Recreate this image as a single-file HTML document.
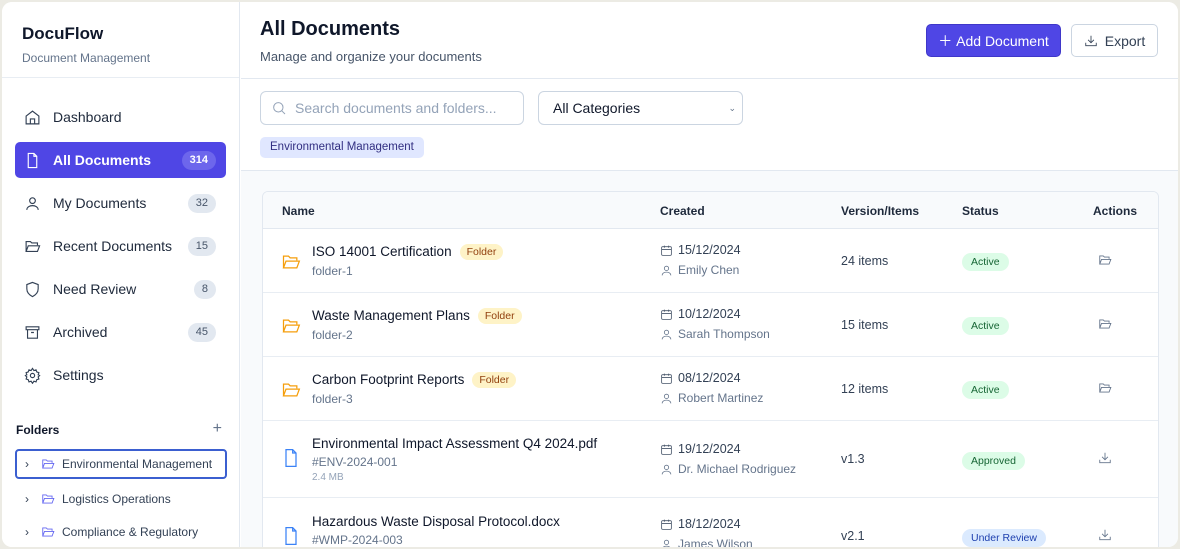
<!DOCTYPE html>
<html><head><style>
*{box-sizing:border-box;margin:0;padding:0}
body{width:1180px;height:549px;overflow:hidden;background:#ecebe4;font-family:"Liberation Sans",sans-serif;color:#0f172a}
.frame{position:absolute;left:2px;top:2px;width:1176px;height:545px;background:#fff;border-radius:10px;overflow:hidden}
.side{position:absolute;left:0;top:0;width:238px;height:545px;border-right:1px solid #e2e8f0;background:#fff}
.brand{height:76px;border-bottom:1px solid #e8edf3;padding:22px 0 0 20px}
.brand b{font-size:17px;display:block}
.brand span{font-size:12px;color:#64748b;display:block;margin-top:7px}
.nav{position:absolute;left:13px;width:211px;height:36px;border-radius:5px;display:flex;align-items:center;padding-left:9px;font-size:14px;color:#1e293b}
.nav svg{width:17px;height:17px;margin-right:12px;stroke:#334155;fill:none;stroke-width:1.6}
.nav .c{position:absolute;right:10px;background:#e2e8f0;color:#475569;font-size:11px;border-radius:10px;height:19px;line-height:19px;padding:0 8px}
.nav.act{background:#4f46e5;color:#fff;font-weight:bold}
.nav.act svg{stroke:#fff}
.nav.act .c{background:#6d66ec;color:#fff;font-weight:bold}
.fh{position:absolute;left:14px;top:421px;font-size:12px;font-weight:bold;width:206px}
.fh i{position:absolute;right:0;top:-3px;font-style:normal;color:#64748b;font-size:16px;font-weight:normal}
.fold{position:absolute;left:13px;width:212px;height:30px;font-size:12px;color:#334155;display:flex;align-items:center;padding-left:10px}
.fold.sel{border:2px solid #3b5fd0;border-radius:4px;padding-left:8px}
.fold svg{width:14px;height:14px;fill:none;stroke-width:1.5}
.main{position:absolute;left:239px;top:0;right:0;bottom:0;background:#f8fafc}
.hdr{height:77px;background:#fff;border-bottom:1px solid #e2e8f0;padding:16px 0 0 19px}
.hdr h1{font-size:20px;font-weight:bold}
.hdr p{font-size:13px;color:#475569;margin-top:8px}
.btn{position:absolute;top:22px;height:33px;border-radius:5px;font-size:14px;display:flex;align-items:center;justify-content:center}
.filt{height:92px;background:#fff;border-bottom:1px solid #e2e8f0;position:relative}
.inp{position:absolute;top:12px;height:34px;border:1px solid #cbd5e1;border-radius:6px;font-size:14px;display:flex;align-items:center}
.tag{position:absolute;left:19px;top:58px;height:21px;background:#e0e7ff;color:#312e81;font-size:11.5px;border-radius:5px;padding:0 10px;line-height:21px}
.card{position:absolute;left:21px;top:189px;width:897px;height:370px;background:#fff;border:1px solid #e2e8f0;border-radius:6px;overflow:hidden}
.th{height:37px;background:#f8fafc;border-bottom:1px solid #e2e8f0;font-size:12px;font-weight:bold;position:relative;color:#1e293b}
.th span,.r span{position:absolute}
.r{position:relative;border-bottom:1px solid #e8edf3;font-size:13px}
.nm{left:49px;top:15px;font-size:13.5px;color:#0f172a}
.sub{left:49px;font-size:12px;color:#64748b}
.badge{display:inline-block;background:#fef3c7;color:#92400e;font-size:10.5px;border-radius:9px;padding:2px 7px;margin-left:8px;vertical-align:1px}
.st{font-size:10.5px;border-radius:9px;padding:3px 9px;background:#dcfce7;color:#166534}
.dt{left:397px;font-size:12.5px;color:#334155;display:flex;align-items:center}
.au{left:397px;font-size:12px;color:#64748b;display:flex;align-items:center}
.dt svg,.au svg{margin-right:5px}
svg.s{stroke-width:1.5;fill:none}
</style></head><body><div class="frame">
<div class="side">
<div class="brand"><b>DocuFlow</b><span>Document Management</span></div>
<div class="nav" style="top:97px"><svg viewBox="0 0 24 24"><path d="M3 10l9-7 9 7v11H3z M9 21v-7h6v7"/></svg>Dashboard</div>
<div class="nav act" style="top:140px"><svg viewBox="0 0 24 24"><path d="M14 2H6v20h12V6z M14 2v4h4"/></svg>All Documents<span class="c">314</span></div>
<div class="nav" style="top:183px"><svg viewBox="0 0 24 24"><circle cx="12" cy="8" r="4"/><path d="M4 21c0-4 4-6 8-6s8 2 8 6"/></svg>My Documents<span class="c">32</span></div>
<div class="nav" style="top:226px"><svg viewBox="0 0 24 24"><path d="M3 19V5h6l2 2h8v3 M3 19l3-8h16l-3 8z"/></svg>Recent Documents<span class="c">15</span></div>
<div class="nav" style="top:269px"><svg viewBox="0 0 24 24"><path d="M12 2l8 3v6c0 6-4 9-8 11-4-2-8-5-8-11V5z"/></svg>Need Review<span class="c">8</span></div>
<div class="nav" style="top:312px"><svg viewBox="0 0 24 24"><path d="M3 4h18v4H3z M5 8v12h14V8 M10 12h4"/></svg>Archived<span class="c">45</span></div>
<div class="nav" style="top:355px"><svg viewBox="0 0 24 24"><circle cx="12" cy="12" r="3"/><path d="M12 2l2 3 3-1 1 3 3 1-1 3 2 1-2 2 1 3-3 1-1 3-3-1-2 3-2-3-3 1-1-3-3-1 1-3-2-2 2-1-1-3 3-1 1-3 3 1z"/></svg>Settings</div>
<div class="fh">Folders<i>+</i></div>
<div class="fold sel" style="top:447px"><span style="color:#334155;margin-right:12px">›</span><svg viewBox="0 0 24 24" stroke="#6366f1"><path d="M3 19V5h6l2 2h8v3 M3 19l3-8h16l-3 8z"/></svg><span style="margin-left:7px">Environmental Management</span></div>
<div class="fold" style="top:482px"><span style="margin-right:12px">›</span><svg viewBox="0 0 24 24" stroke="#6366f1"><path d="M3 19V5h6l2 2h8v3 M3 19l3-8h16l-3 8z"/></svg><span style="margin-left:7px">Logistics Operations</span></div>
<div class="fold" style="top:515px"><span style="margin-right:12px">›</span><svg viewBox="0 0 24 24" stroke="#6366f1"><path d="M3 19V5h6l2 2h8v3 M3 19l3-8h16l-3 8z"/></svg><span style="margin-left:7px">Compliance &amp; Regulatory</span></div>
</div>
<div class="main">
<div class="hdr"><h1>All Documents</h1><p>Manage and organize your documents</p>
<div class="btn" style="left:685px;width:135px;background:#4f46e5;color:#fff;border:1px solid #3f37c9">＋&nbsp;Add Document</div>
<div class="btn" style="left:830px;width:87px;border:1px solid #cbd5e1;color:#334155;background:#fff"><svg class="s" width="14" height="14" viewBox="0 0 24 24" stroke="#334155" style="margin-right:7px"><path d="M12 3v12 M7 10l5 5 5-5 M3 15v5h18v-5"/></svg>Export</div>
</div>
<div class="filt">
<div class="inp" style="left:19px;width:264px;color:#94a3b8"><svg class="s" width="16" height="16" viewBox="0 0 24 24" stroke="#94a3b8" style="margin:0 8px 0 10px"><circle cx="11" cy="11" r="7"/><path d="M16 16l5 5"/></svg>Search documents and folders...</div>
<div class="inp" style="left:297px;width:205px;padding-left:14px;color:#0f172a">All Categories<span style="position:absolute;right:6px;font-size:9px;color:#64748b">⌄</span></div>
<div class="tag">Environmental Management</div>
</div>
<div class="card">
<div class="th"><span style="left:19px;top:12px">Name</span><span style="left:397px;top:12px">Created</span><span style="left:578px;top:12px">Version/Items</span><span style="left:699px;top:12px">Status</span><span style="left:830px;top:12px">Actions</span></div>
<div class="r" style="height:64px"><svg class="s" style="position:absolute;top:23px;left:18px" width="20" height="20" viewBox="0 0 24 24" stroke="#f59e0b" stroke-width="1.8"><path d="M3 19V5h6l2 2h8v3 M3 19l3-8h16l-3 8z"/></svg>
<span class="nm">ISO 14001 Certification<span class="badge">Folder</span></span><span class="sub" style="top:35px">folder-1</span>
<span class="dt" style="top:14px"><svg class="s" width="13" height="13" viewBox="0 0 24 24" stroke="#475569" stroke-width="2"><rect x="3" y="5" width="18" height="16" rx="2"/><path d="M3 10h18 M8 3v4 M16 3v4"/></svg>15/12/2024</span><span class="au" style="top:34px"><svg class="s" width="13" height="13" viewBox="0 0 24 24" stroke="#64748b" stroke-width="2"><circle cx="12" cy="8" r="4"/><path d="M4 21c0-4 4-6 8-6s8 2 8 6"/></svg>Emily Chen</span>
<span style="left:578px;top:25px;font-size:12.5px;color:#334155">24 items</span><span class="st" style="left:699px;top:24px">Active</span><span style="left:835px;top:24px"><svg class="s" width="14" height="14" viewBox="0 0 24 24" stroke="#64748b"><path d="M3 19V5h6l2 2h8v3 M3 19l3-8h16l-3 8z"/></svg></span></div>
<div class="r" style="height:64px"><svg class="s" style="position:absolute;top:23px;left:18px" width="20" height="20" viewBox="0 0 24 24" stroke="#f59e0b" stroke-width="1.8"><path d="M3 19V5h6l2 2h8v3 M3 19l3-8h16l-3 8z"/></svg>
<span class="nm">Waste Management Plans<span class="badge">Folder</span></span><span class="sub" style="top:35px">folder-2</span>
<span class="dt" style="top:14px"><svg class="s" width="13" height="13" viewBox="0 0 24 24" stroke="#475569" stroke-width="2"><rect x="3" y="5" width="18" height="16" rx="2"/><path d="M3 10h18 M8 3v4 M16 3v4"/></svg>10/12/2024</span><span class="au" style="top:34px"><svg class="s" width="13" height="13" viewBox="0 0 24 24" stroke="#64748b" stroke-width="2"><circle cx="12" cy="8" r="4"/><path d="M4 21c0-4 4-6 8-6s8 2 8 6"/></svg>Sarah Thompson</span>
<span style="left:578px;top:25px;font-size:12.5px;color:#334155">15 items</span><span class="st" style="left:699px;top:24px">Active</span><span style="left:835px;top:24px"><svg class="s" width="14" height="14" viewBox="0 0 24 24" stroke="#64748b"><path d="M3 19V5h6l2 2h8v3 M3 19l3-8h16l-3 8z"/></svg></span></div>
<div class="r" style="height:64px"><svg class="s" style="position:absolute;top:23px;left:18px" width="20" height="20" viewBox="0 0 24 24" stroke="#f59e0b" stroke-width="1.8"><path d="M3 19V5h6l2 2h8v3 M3 19l3-8h16l-3 8z"/></svg>
<span class="nm">Carbon Footprint Reports<span class="badge">Folder</span></span><span class="sub" style="top:35px">folder-3</span>
<span class="dt" style="top:14px"><svg class="s" width="13" height="13" viewBox="0 0 24 24" stroke="#475569" stroke-width="2"><rect x="3" y="5" width="18" height="16" rx="2"/><path d="M3 10h18 M8 3v4 M16 3v4"/></svg>08/12/2024</span><span class="au" style="top:34px"><svg class="s" width="13" height="13" viewBox="0 0 24 24" stroke="#64748b" stroke-width="2"><circle cx="12" cy="8" r="4"/><path d="M4 21c0-4 4-6 8-6s8 2 8 6"/></svg>Robert Martinez</span>
<span style="left:578px;top:25px;font-size:12.5px;color:#334155">12 items</span><span class="st" style="left:699px;top:24px">Active</span><span style="left:835px;top:24px"><svg class="s" width="14" height="14" viewBox="0 0 24 24" stroke="#64748b"><path d="M3 19V5h6l2 2h8v3 M3 19l3-8h16l-3 8z"/></svg></span></div>
<div class="r" style="height:77px"><svg class="s" style="position:absolute;top:27px;left:18px" width="20" height="20" viewBox="0 0 24 24" stroke="#3b82f6" stroke-width="1.6"><path d="M14 2H6v20h12V6z M14 2v4h4"/></svg>
<span class="nm">Environmental Impact Assessment Q4 2024.pdf</span><span class="sub" style="top:34px">#ENV-2024-001</span><span class="sub" style="top:51px;font-size:10px;color:#94a3b8">2.4 MB</span>
<span class="dt" style="top:21px"><svg class="s" width="13" height="13" viewBox="0 0 24 24" stroke="#475569" stroke-width="2"><rect x="3" y="5" width="18" height="16" rx="2"/><path d="M3 10h18 M8 3v4 M16 3v4"/></svg>19/12/2024</span><span class="au" style="top:41px"><svg class="s" width="13" height="13" viewBox="0 0 24 24" stroke="#64748b" stroke-width="2"><circle cx="12" cy="8" r="4"/><path d="M4 21c0-4 4-6 8-6s8 2 8 6"/></svg>Dr. Michael Rodriguez</span>
<span style="left:578px;top:31px;font-size:12.5px;color:#334155">v1.3</span><span class="st" style="left:699px;top:31px">Approved</span><span style="left:835px;top:30px"><svg class="s" width="14" height="14" viewBox="0 0 24 24" stroke="#64748b"><path d="M12 3v12 M7 10l5 5 5-5 M3 15v5h18v-5"/></svg></span></div>
<div class="r" style="height:77px;border:0"><svg class="s" style="position:absolute;top:28px;left:18px" width="20" height="20" viewBox="0 0 24 24" stroke="#3b82f6" stroke-width="1.6"><path d="M14 2H6v20h12V6z M14 2v4h4"/></svg>
<span class="nm" style="top:16px">Hazardous Waste Disposal Protocol.docx</span><span class="sub" style="top:35px">#WMP-2024-003</span>
<span class="dt" style="top:19px"><svg class="s" width="13" height="13" viewBox="0 0 24 24" stroke="#475569" stroke-width="2"><rect x="3" y="5" width="18" height="16" rx="2"/><path d="M3 10h18 M8 3v4 M16 3v4"/></svg>18/12/2024</span><span class="au" style="top:39px"><svg class="s" width="13" height="13" viewBox="0 0 24 24" stroke="#64748b" stroke-width="2"><circle cx="12" cy="8" r="4"/><path d="M4 21c0-4 4-6 8-6s8 2 8 6"/></svg>James Wilson</span>
<span style="left:578px;top:31px;font-size:12.5px;color:#334155">v2.1</span><span class="st" style="left:699px;top:31px;background:#dbeafe;color:#1e40af">Under Review</span><span style="left:835px;top:30px"><svg class="s" width="14" height="14" viewBox="0 0 24 24" stroke="#64748b"><path d="M12 3v12 M7 10l5 5 5-5 M3 15v5h18v-5"/></svg></span></div>
</div>
</div>
</div></body></html>
